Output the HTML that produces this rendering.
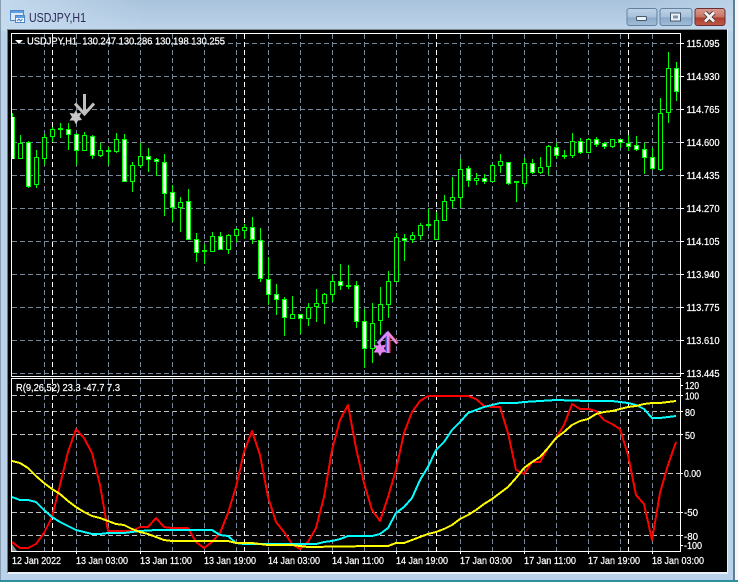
<!DOCTYPE html>
<html lang="en">
<head>
<meta charset="utf-8">
<title>USDJPY,H1</title>
<style>
html,body{margin:0;padding:0;width:738px;height:582px;overflow:hidden;background:#b9d1e8}
svg{display:block}
text{font-family:"Liberation Sans",sans-serif;font-size:10px;fill:#fff;stroke:#fff;stroke-width:.22px}
</style>
</head>
<body>
<svg xmlns="http://www.w3.org/2000/svg" width="738" height="582" viewBox="0 0 738 582">
<defs>
<linearGradient id="ti" x1="0" y1="0" x2="0" y2="1"><stop offset="0" stop-color="#a9c3dc"/><stop offset="1" stop-color="#bdd4ea"/></linearGradient>
<linearGradient id="tw" x1="0" y1="0" x2="1" y2="0"><stop offset="0" stop-color="#c6dbee" stop-opacity=".9"/><stop offset=".2" stop-color="#c6dbee" stop-opacity="0"/><stop offset=".85" stop-color="#c6dbee" stop-opacity="0"/><stop offset="1" stop-color="#c6dbee" stop-opacity=".6"/></linearGradient>
<linearGradient id="bn" x1="0" y1="0" x2="0" y2="1"><stop offset="0" stop-color="#bfd3e8"/><stop offset=".5" stop-color="#a8c1db"/><stop offset=".55" stop-color="#8ba9c9"/><stop offset="1" stop-color="#a2bdd9"/></linearGradient>
<linearGradient id="bc" x1="0" y1="0" x2="0" y2="1"><stop offset="0" stop-color="#d89c8f"/><stop offset=".5" stop-color="#c87464"/><stop offset=".55" stop-color="#ad3f30"/><stop offset="1" stop-color="#bf5a46"/></linearGradient>
</defs>

<!-- window frame -->
<rect width="738" height="582" fill="#bad2e9"/>
<rect width="738" height="31" fill="url(#ti)"/>
<rect width="738" height="31" fill="url(#tw)"/>
<rect x="0" y="0" width="1" height="582" fill="#8a9eb2"/>
<rect x="733" y="0" width="2" height="582" fill="#5f7f95"/>
<rect x="735" y="0" width="3" height="582" fill="#f4f6f8"/>
<rect x="0" y="580" width="738" height="2" fill="#2f8f9c"/>
<rect x="7" y="29" width="721" height="545" fill="#e8eff6"/>
<rect x="7" y="29" width="720" height="1" fill="#7d8a96"/>
<rect x="7" y="29" width="1" height="544" fill="#6c7780"/>
<rect x="8" y="30" width="719" height="542" fill="#000"/>

<!-- title icon -->
<g shape-rendering="crispEdges">
<rect x="10.5" y="10.5" width="13" height="10" fill="#dbe9f8" stroke="#4f87c6"/>
<rect x="11" y="11" width="12" height="2" fill="#5f9ee0"/>
<rect x="15.5" y="15.5" width="9" height="7" fill="#f4f8fc" stroke="#4f87c6"/>
<rect x="16" y="16" width="8" height="2" fill="#5f9ee0"/>
</g>
<path d="M17 21l2-2 1.500 2 2-2" fill="none" stroke="#3f78b8" stroke-width="1"/>
<text x="29" y="22" textLength="57" lengthAdjust="spacingAndGlyphs" style="font-size:13px;fill:#2b2b55;stroke:none">USDJPY,H1</text>

<!-- window buttons -->
<rect x="627" y="8.500" width="30" height="17" rx="2.500" fill="url(#bn)" stroke="#64819f"/>
<rect x="660" y="8.500" width="32" height="17" rx="2.500" fill="url(#bn)" stroke="#64819f"/>
<rect x="695" y="8.500" width="30" height="17" rx="2.500" fill="url(#bc)" stroke="#6b2c35"/>
<rect x="636.500" y="16.500" width="10" height="4" rx="1" fill="#eef2f6" stroke="#44586e"/>
<rect x="670.500" y="13" width="10" height="8" fill="#eef2f6" stroke="#44586e"/>
<rect x="673" y="15.500" width="5" height="3" fill="#7f97b0"/>
<path d="M705 12.500l9 9M714 12.500l-9 9" stroke="#4a3436" stroke-width="4.500"/>
<path d="M705 12.500l9 9M714 12.500l-9 9" stroke="#f2f2f2" stroke-width="2.800"/>

<!-- main grid -->
<g fill="none" stroke-width="1" shape-rendering="crispEdges">
<path stroke="#778899" stroke-dasharray="5 3" d="M12 43.500H680M12 76.500H680M12 109.500H680M12 142.500H680M12 175.500H680M12 208.500H680M12 241.500H680M12 274.500H680M12 307.500H680M12 340.500H680M12 373.500H680"/>
<path stroke="#778899" stroke-dasharray="5 3" d="M44.500 34V376M76.500 34V376M108.500 34V376M140.500 34V376M172.500 34V376M204.500 34V376M236.500 34V376M268.500 34V376M300.500 34V376M332.500 34V376M364.500 34V376M396.500 34V376M428.500 34V376M460.500 34V376M492.500 34V376M524.500 34V376M556.500 34V376M588.500 34V376M620.500 34V376M652.500 34V376"/>
<path stroke="#fff" stroke-dasharray="5 3" d="M52.500 34V376M244.500 34V376M436.500 34V376M628.500 34V376"/>
<!-- indicator grid -->
<path stroke="#c0c0c0" stroke-dasharray="5 3" d="M12 395.500H680M12 411.500H680M12 434.500H680M12 473.500H680M12 512.500H680M12 535.500H680"/>
<path stroke="#778899" stroke-dasharray="5 3" d="M44.500 379V551M76.500 379V551M108.500 379V551M140.500 379V551M172.500 379V551M204.500 379V551M236.500 379V551M268.500 379V551M300.500 379V551M332.500 379V551M364.500 379V551M396.500 379V551M428.500 379V551M460.500 379V551M492.500 379V551M524.500 379V551M556.500 379V551M588.500 379V551M620.500 379V551M652.500 379V551"/>
<path stroke="#fff" stroke-dasharray="5 3" d="M52.500 379V551M244.500 379V551M436.500 379V551M628.500 379V551"/>
</g>

<!-- wicks -->
<path fill="none" stroke="#00ff00" stroke-width="1" d="M12.500 113V159M20.500 135V159M28.500 141V188M36.500 150V188M44.500 134V165M52.500 127V142M60.500 123V138M68.500 123V150M76.500 133V165M84.500 132V151M92.500 135V159M100.500 143V157M108.500 147V165M116.500 133V153M124.500 134V182M132.500 162V192M140.500 143V168M148.500 148V172M156.500 158V176M164.500 154V216M172.500 185V222M180.500 197V232M188.500 189V240M196.500 233V262M204.500 244V264M212.500 232V252M220.500 232V250M228.500 234V254M236.500 228V242M244.500 224V239M252.500 217V244M260.500 228V282M268.500 257V305M276.500 284V315M284.500 297V336M292.500 296V319M300.500 314V334M308.500 303V326M316.500 289V322M324.500 293V324M332.500 275V302M340.500 264V290M348.500 265V289M356.500 281V328M364.500 309V368M372.500 303V363M380.500 287V335M388.500 271V318M396.500 233V282M404.500 234V261M412.500 232V243M420.500 223V240M428.500 209V228M436.500 212V240M444.500 195V221M452.500 177V208M460.500 159V208M468.500 166V187M476.500 173V185M484.500 174V184M492.500 164V182M500.500 154V173M508.500 162V185M516.500 181V202M524.500 158V187M532.500 159V174M540.500 157V174M548.500 145V175M556.500 143V159M564.500 150V159M572.500 133V158M580.500 138V154M588.500 138V153M596.500 137V147M604.500 142V149M612.500 139V148M620.500 139V148M628.500 135V151M636.500 136V151M644.500 143V174M652.500 148V170M660.500 98V171M668.500 52V123M676.500 62V101"/>
<!-- hollow bodies -->
<path fill="#000" stroke="#00ff00" stroke-width="1" d="M18.500 143.500h4v15h-4zM34.500 157.500h4v27h-4zM42.500 137.500h4v21h-4zM50.500 129.500h4v7h-4zM82.500 135.500h4v15h-4zM98.500 150.500h4v5h-4zM114.500 139.500h4v12h-4zM130.500 165.500h4v16h-4zM138.500 156.500h4v9h-4zM178.500 202.500h4v5h-4zM210.500 236.500h4v15h-4zM226.500 235.500h4v14h-4zM234.500 229.500h4v6h-4zM242.500 227.500h4v3h-4zM290.500 314.500h4v4h-4zM306.500 307.500h4v11h-4zM314.500 303.500h4v3h-4zM322.500 294.500h4v9h-4zM330.500 281.500h4v13h-4zM370.500 323.500h4v25h-4zM378.500 304.500h4v16h-4zM386.500 281.500h4v23h-4zM394.500 237.500h4v44h-4zM410.500 235.500h4v4h-4zM418.500 225.500h4v10h-4zM434.500 220.500h4v19h-4zM442.500 201.500h4v19h-4zM450.500 197.500h4v3h-4zM458.500 169.500h4v28h-4zM474.500 178.500h4v2h-4zM490.500 165.500h4v16h-4zM498.500 161.500h4v4h-4zM522.500 163.500h4v20h-4zM538.500 167.500h4v5h-4zM546.500 146.500h4v20h-4zM570.500 141.500h4v14h-4zM586.500 139.500h4v13h-4zM610.500 139.500h4v7h-4zM658.500 113.500h4v56h-4zM666.500 68.500h4v44h-4z"/>
<!-- white bodies -->
<path fill="#fff" stroke="#00ff00" stroke-width="1" d="M26.500 142.500h4v44h-4zM66.500 129.500h4v5h-4zM74.500 134.500h4v16h-4zM90.500 136.500h4v19h-4zM122.500 139.500h4v42h-4zM146.500 156.500h4v3h-4zM154.500 159.500h4v2h-4zM162.500 162.500h4v31h-4zM170.500 192.500h4v15h-4zM186.500 201.500h4v38h-4zM194.500 239.500h4v13h-4zM218.500 236.500h4v13h-4zM250.500 227.500h4v12h-4zM258.500 240.500h4v38h-4zM266.500 279.500h4v15h-4zM274.500 294.500h4v5h-4zM282.500 299.500h4v18h-4zM298.500 314.500h4v4h-4zM338.500 281.500h4v4h-4zM354.500 285.500h4v36h-4zM362.500 321.500h4v27h-4zM402.500 238.500h4v2h-4zM466.500 168.500h4v12h-4zM482.500 178.500h4v3h-4zM506.500 162.500h4v21h-4zM530.500 163.500h4v9h-4zM554.500 147.500h4v8h-4zM578.500 141.500h4v11h-4zM594.500 139.500h4v5h-4zM602.500 143.500h4v3h-4zM618.500 139.500h4v3h-4zM626.500 143.500h4v3h-4zM634.500 145.500h4v4h-4zM642.500 149.500h4v8h-4zM650.500 157.500h4v11h-4zM674.500 68.500h4v23h-4z"/>
<rect x="12" y="117" width="2" height="42" fill="#fff"/>
<rect x="14" y="117" width="1" height="42" fill="#00ff00"/>
<!-- doji -->
<path fill="none" stroke="#00ff00" stroke-width="2" d="M58 129h5M106 151h5M202 251h5M346 286h5M426 225h5M514 182h5M562 156h5"/>

<!-- arrows and stars -->
<g fill="none" stroke="#c0c0c0" stroke-width="3">
<path d="M84.500 94V114"/>
<path d="M75 103.500L84.500 114L94 103.500"/>
</g>
<polygon fill="#c8c8c8" points="76,110 77.500,113.500 81.500,112.500 79.500,116.500 82,120 78,120.500 76,124.500 74,120.500 69.500,120.500 72,117 69.500,113 74,113.500"/>
<g fill="none" stroke-width="3">
<path stroke="#3a50e0" d="M386.800 353V333M377.500 343.500L387.500 332.500"/>
<path stroke="#e83a3a" d="M389 353V334M388 333L397.500 343.500"/>
<path stroke="#e48aee" stroke-width="2.400" d="M388 353V333M378 343.500L388 332.500L397 343.500"/>
</g>
<polygon fill="#e582ee" points="380,341.500 381.500,345.500 386,344.500 384,348.500 386.500,352 382,352.500 380,356.500 378,352.500 373.500,352.500 376,349 373.500,345 378,345.500"/>

<!-- axes -->
<g fill="none" stroke="#fff" stroke-width="1" shape-rendering="crispEdges">
<rect x="11.500" y="33.500" width="669" height="343"/>
<rect x="11.500" y="378.500" width="669" height="173"/>
<path d="M680 43.500h4M680 76.500h4M680 109.500h4M680 142.500h4M680 175.500h4M680 208.500h4M680 241.500h4M680 274.500h4M680 307.500h4M680 340.500h4M680 373.500h4"/>
<path d="M680 395.500h3M680 411.500h3M680 434.500h3M680 473.500h3M680 512.500h3M680 535.500h3M680 385.500h3M680 545.500h3"/>
<path d="M76.500 551v3M140.500 551v3M204.500 551v3M268.500 551v3M332.500 551v3M396.500 551v3M460.500 551v3M524.500 551v3M588.500 551v3M652.500 551v3"/>
</g>

<!-- indicator lines -->
<g fill="none" stroke-width="2" stroke-linejoin="round" shape-rendering="crispEdges">
<polyline stroke="#ff0000" points="12,542 20,548 28,548 36,544 44,533 52,517 60,485 68,452 76,429 84,438 92,453 100,485 108,531 116,531 124,531 132,531 140,527 148,527 156,518 164,527 172,528 180,528 188,528 196,542 204,548 212,542 220,533 228,513 236,487 244,452 252,431 260,455 268,497 276,522 284,532 292,544 300,549 308,542 316,528 324,497 332,450 340,420 348,405 356,448 364,483 372,510 380,521 388,497 396,470 404,433 412,412 420,401 428,396 436,396 444,396 452,396 460,396 468,396 476,399 484,406 492,407 500,407 508,433 516,470 524,474 532,462 540,462 548,448 556,438 564,425 572,404 580,409 588,409 596,411 604,420 612,424 620,429 628,455 636,495 644,504 652,540 660,493 668,465 676,442"/>
<polyline stroke="#00ffff" points="12,497 20,500 28,500 36,502 44,510 52,517 60,522 68,526 76,530 84,532 92,534 100,534 108,533 116,533 124,533 132,532 140,531 156,530 212,530 220,535 228,536 236,543 244,544 316,544 324,542 332,541 340,539 348,536 372,536 380,534 388,528 396,513 404,507 412,498 420,480 428,467 436,450 444,442 452,430 460,422 468,413 476,410 484,407 492,405 500,403 516,403 524,402 556,400 588,401 612,401 628,403 636,405 644,409 652,418 660,418 668,417 676,416"/>
<polyline stroke="#ffff00" points="12,461 20,463 28,468 36,476 44,483 52,489 60,494 68,501 76,507 84,512 92,516 100,518 108,521 116,524 124,525 132,529 140,532 148,534 156,537 164,540 172,541 228,541 236,543 244,543 252,543 268,545 292,545 308,547 372,546 388,546 396,543 404,543 412,540 420,537 428,534 436,532 444,529 452,525 460,519 468,515 476,510 484,504 492,499 500,493 508,487 516,478 524,468 532,462 540,457 548,448 556,438 564,432 572,425 580,421 588,419 596,414 604,412 612,411 620,409 628,407 636,406 644,404 652,403 660,403 668,402 676,401"/>
</g>
<polygon points="12,544 12,551 17,551" fill="#8a8a8a"/>

<!-- header text -->
<polygon points="15,40 23,40 19,44" fill="#fff"/>
<text x="27" y="44.500" textLength="198" lengthAdjust="spacingAndGlyphs" xml:space="preserve">USDJPY,H1  130.247 130.286 130.198 130.255</text>
<text x="16" y="391" textLength="104" lengthAdjust="spacingAndGlyphs">R(9,26,52) 23.3 -47.7 7.3</text>

<!-- price axis -->
<text x="686.500" y="47" textLength="33" lengthAdjust="spacingAndGlyphs">115.095</text>
<text x="686.500" y="80" textLength="33" lengthAdjust="spacingAndGlyphs">114.930</text>
<text x="686.500" y="113" textLength="33" lengthAdjust="spacingAndGlyphs">114.765</text>
<text x="686.500" y="146" textLength="33" lengthAdjust="spacingAndGlyphs">114.600</text>
<text x="686.500" y="179" textLength="33" lengthAdjust="spacingAndGlyphs">114.435</text>
<text x="686.500" y="212" textLength="33" lengthAdjust="spacingAndGlyphs">114.270</text>
<text x="686.500" y="245" textLength="33" lengthAdjust="spacingAndGlyphs">114.105</text>
<text x="686.500" y="278" textLength="33" lengthAdjust="spacingAndGlyphs">113.940</text>
<text x="686.500" y="311" textLength="33" lengthAdjust="spacingAndGlyphs">113.775</text>
<text x="686.500" y="344" textLength="33" lengthAdjust="spacingAndGlyphs">113.610</text>
<text x="686.500" y="377" textLength="33" lengthAdjust="spacingAndGlyphs">113.445</text>

<!-- indicator axis -->
<text x="685" y="389" textLength="14" lengthAdjust="spacingAndGlyphs">120</text>
<text x="685" y="399.500" textLength="14" lengthAdjust="spacingAndGlyphs">100</text>
<text x="685" y="416" textLength="10" lengthAdjust="spacingAndGlyphs">80</text>
<text x="685" y="439" textLength="10" lengthAdjust="spacingAndGlyphs">50</text>
<text x="684" y="477" textLength="17" lengthAdjust="spacingAndGlyphs">0.00</text>
<text x="684" y="516" textLength="14" lengthAdjust="spacingAndGlyphs">-50</text>
<text x="684" y="540" textLength="14" lengthAdjust="spacingAndGlyphs">-80</text>
<text x="684" y="549" textLength="18" lengthAdjust="spacingAndGlyphs">-100</text>

<!-- time axis -->
<text x="12" y="564" textLength="49" lengthAdjust="spacingAndGlyphs">12 Jan 2022</text>
<text x="76" y="564" textLength="52" lengthAdjust="spacingAndGlyphs">13 Jan 03:00</text>
<text x="140" y="564" textLength="52" lengthAdjust="spacingAndGlyphs">13 Jan 11:00</text>
<text x="204" y="564" textLength="52" lengthAdjust="spacingAndGlyphs">13 Jan 19:00</text>
<text x="268" y="564" textLength="52" lengthAdjust="spacingAndGlyphs">14 Jan 03:00</text>
<text x="332" y="564" textLength="52" lengthAdjust="spacingAndGlyphs">14 Jan 11:00</text>
<text x="396" y="564" textLength="52" lengthAdjust="spacingAndGlyphs">14 Jan 19:00</text>
<text x="460" y="564" textLength="52" lengthAdjust="spacingAndGlyphs">17 Jan 03:00</text>
<text x="524" y="564" textLength="52" lengthAdjust="spacingAndGlyphs">17 Jan 11:00</text>
<text x="588" y="564" textLength="52" lengthAdjust="spacingAndGlyphs">17 Jan 19:00</text>
<text x="652" y="564" textLength="52" lengthAdjust="spacingAndGlyphs">18 Jan 03:00</text>
</svg>
</body>
</html>
